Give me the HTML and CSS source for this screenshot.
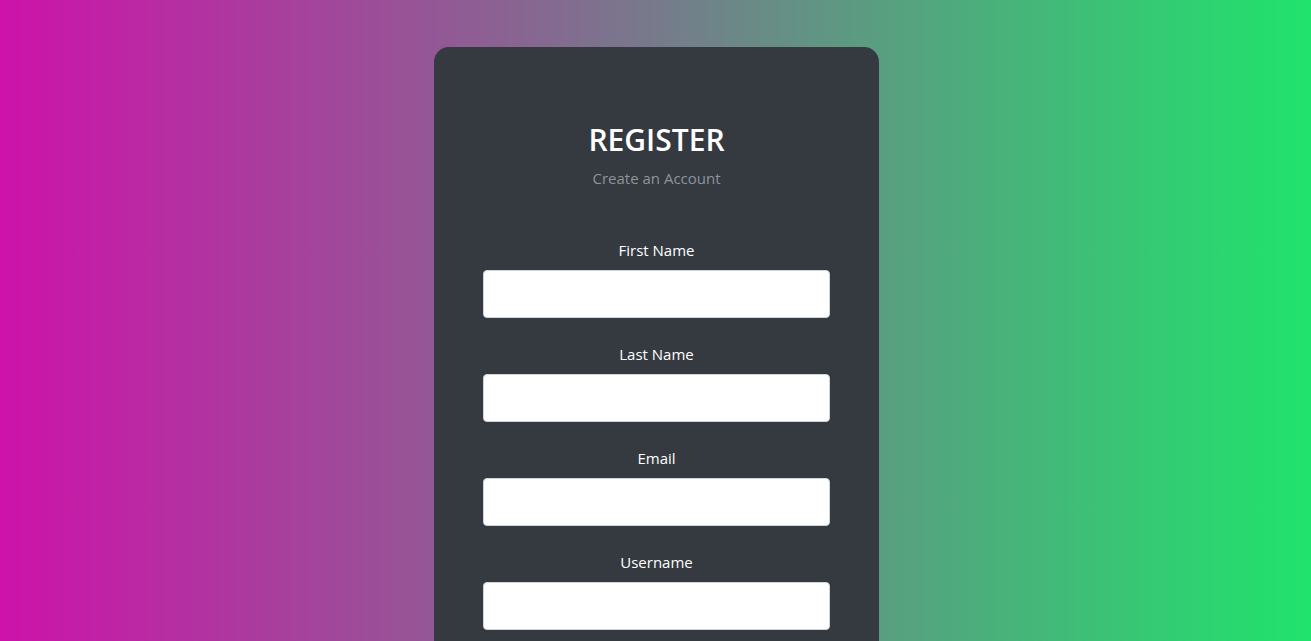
FILE: index.html
```html
<!DOCTYPE html>
<html lang="en">
<head>
<meta charset="utf-8">
<title>Register</title>
<link rel="stylesheet" href="styles.css">
</head>
<body>
<main class="page">
  <form class="card">
    <h1 class="title">REGISTER</h1>
    <p class="subtitle">Create an Account</p>
    <div class="field">
      <label class="label" for="fn">First Name</label>
      <input class="input" id="fn" type="text">
    </div>
    <div class="field">
      <label class="label" for="ln">Last Name</label>
      <input class="input" id="ln" type="text">
    </div>
    <div class="field">
      <label class="label" for="em">Email</label>
      <input class="input" id="em" type="email">
    </div>
    <div class="field">
      <label class="label" for="un">Username</label>
      <input class="input" id="un" type="text">
    </div>
  </form>
</main>
</body>
</html>
```
FILE: styles.css
```css
html, body {
  margin: 0;
  height: 100%;
  overflow: hidden;
}
body {
  background: linear-gradient(to right, #cd12aa, #20e36c);
  font-family: "Open Sans", "Noto Sans", sans-serif;
}
.page {
  display: flex;
  justify-content: center;
  padding-top: 47px;
  padding-left: 2px;
}
.card {
  width: 445px;
  box-sizing: border-box;
  background: #343a40;
  border-radius: 15px;
  padding: 75px 49px 120px;
  display: flex;
  flex-direction: column;
  align-items: stretch;
  text-align: center;
}
.title {
  margin: 0;
  font-size: 30px;
  line-height: 36px;
  font-weight: 600;
  color: #ffffff;
  letter-spacing: 0;
}
.subtitle {
  margin: 9px 0 0;
  font-size: 15px;
  line-height: 22px;
  color: #8d949b;
}
.field {
  display: flex;
  flex-direction: column;
  margin-top: 49px;
}
.field + .field {
  margin-top: 24px;
}
.label {
  font-size: 15px;
  line-height: 24px;
  color: #ffffff;
}
.input {
  margin-top: 8px;
  height: 48px;
  box-sizing: border-box;
  border: 1px solid #ced4da;
  border-radius: 4px;
  background: #ffffff;
  padding: 6px 12px;
  font-size: 16px;
}
```
